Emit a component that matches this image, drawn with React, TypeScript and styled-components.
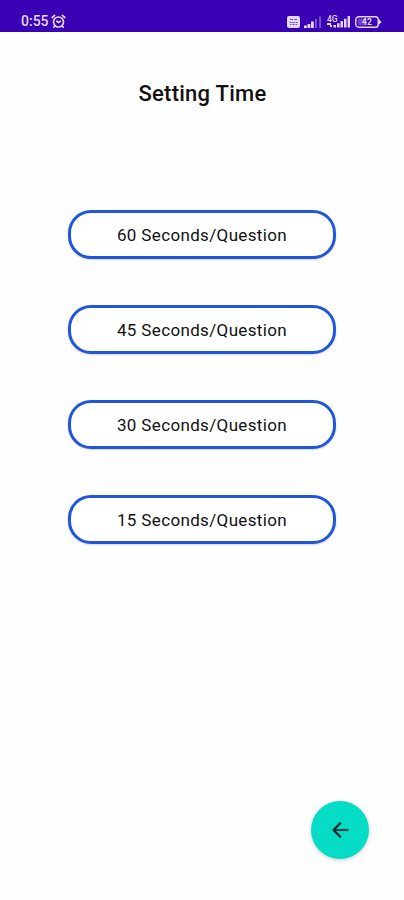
import React from "react";
import styled, { createGlobalStyle } from "styled-components";

const GlobalStyle = createGlobalStyle`
  * { box-sizing: border-box; }
  body { margin: 0; background: #fefefe; font-family: Roboto, sans-serif; }
`;

const Screen = styled.main`
  display: flex;
  flex-direction: column;
  align-items: center;
  width: 404px;
  height: 900px;
  background: #fefefe;
  overflow: hidden;
`;

const StatusBar = styled.header`
  display: flex;
  justify-content: space-between;
  width: 100%;
  height: 32px;
  padding: 14px 22px 0 21px;
  background: #3a00b3;
  color: #e4d8fa;
`;

const StatusGroup = styled.div<{ $gap: number }>`
  display: flex;
  align-items: center;
  gap: ${(p) => p.$gap}px;
  height: 15px;
`;

const Clock = styled.span`
  font-size: 14px;
  line-height: 15px;
  font-weight: 500;
`;

const Title = styled.h1`
  margin: 47px 0 0;
  padding-left: 1px;
  font-size: 22px;
  line-height: 30px;
  font-weight: 500;
  letter-spacing: 0.25px;
  color: #111;
`;

const Options = styled.div`
  display: flex;
  flex-direction: column;
  gap: 46px;
  margin-top: 101px;
`;

const OptionButton = styled.button`
  width: 268px;
  height: 49px;
  padding: 0;
  border: 3px solid #1f56dc;
  border-radius: 23px;
  background: #fff;
  box-shadow: 0 1px 2px rgba(0, 0, 0, 0.16);
  font-family: Roboto, sans-serif;
  font-size: 17px;
  line-height: 20px;
  letter-spacing: 0.35px;
  color: #111;
`;

const BackButton = styled.button`
  display: flex;
  align-items: center;
  justify-content: center;
  width: 58px;
  height: 58px;
  margin: auto 35px 41px auto;
  padding: 0;
  border: 0;
  border-radius: 50%;
  background: #05dcc5;
  box-shadow: 0 1px 4px rgba(0, 0, 0, 0.2);
`;

const times = [60, 45, 30, 15];

const AlarmIcon = () => (
  <svg width="15" height="15" viewBox="0 0 15 15" fill="none" stroke="currentColor" strokeWidth="1.7" strokeLinecap="round">
    <circle cx="7.5" cy="8" r="5" />
    <path d="M1.2 3.5 3.6 1.4M13.8 3.5 11.4 1.4M3.6 12.2 2.7 13.2M11.4 12.2l.9 1M5.8 7.2l1.7 1.3 1.8-1.2" />
  </svg>
);

const VolteIcon = () => (
  <svg width="13" height="12" viewBox="0 0 13 12">
    <rect width="13" height="12" rx="2" fill="currentColor" />
    <path d="M3 3.5h3M7 3.5h3M2.5 6.5h2M5.3 6.5h2.2M8.5 6.5h2M3 8.5h1.5M5.5 8.5h2M8.5 8.5H10" stroke="#5b2cbe" strokeWidth="1" opacity=".85" />
  </svg>
);

const SignalIcon = () => (
  <svg width="18" height="12" viewBox="0 0 18 12" fill="currentColor">
    <path d="M0 9.5h2.8V12H0zM3.5 8h2.8v4H3.5zM7 5.5h2.8V12H7z" />
    <path d="M11 3h2v9h-2zM15 0.5h2V12h-2z" opacity=".38" />
  </svg>
);

const Signal4GIcon = () => (
  <svg width="25" height="13" viewBox="0 0 25 13" fill="currentColor">
    <text x="1" y="6.5" fontFamily="Roboto" fontSize="8.5" fontWeight="500">4G</text>
    <path d="M1 8h4v2H1zM4 10h2v2H4zM7.5 10H10v2.5H7.5zM11 8.2h2.6v4.3H11zM14.5 6h2.5v6.5h-2.5zM18 3.8h2.5v8.7H18zM21.6 1h2.4v11.5h-2.4z" />
  </svg>
);

const BatteryIcon = () => (
  <svg width="27" height="12" viewBox="0 0 27 12">
    <rect x=".8" y=".8" width="22.4" height="10.4" rx="2.8" fill="none" stroke="currentColor" strokeWidth="1.4" />
    <rect x="2.8" y="2.6" width="8" height="6.8" rx="1" fill="currentColor" opacity=".3" />
    <path d="M23.6 2.8 26.5 6 23.6 9.2z" fill="currentColor" />
    <text x="12" y="9" textAnchor="middle" fontFamily="Roboto" fontSize="8.5" fontWeight="700" fill="currentColor">42</text>
  </svg>
);

const ArrowIcon = () => (
  <svg width="18" height="18" viewBox="0 0 18 18" fill="none">
    <path d="M17.5 9H3" stroke="#10454a" strokeWidth="2.2" />
    <path d="M9.7 1.7 2.5 9l7.2 7.3" stroke="#10262a" strokeWidth="2.2" />
  </svg>
);

export default function App() {
  return (
    <>
      <GlobalStyle />
      <Screen>
        <StatusBar>
          <StatusGroup $gap={2}>
            <Clock>0:55</Clock>
            <AlarmIcon />
          </StatusGroup>
          <StatusGroup $gap={4}>
            <VolteIcon />
            <SignalIcon />
            <Signal4GIcon />
            <BatteryIcon />
          </StatusGroup>
        </StatusBar>
        <Title>Setting Time</Title>
        <Options>
          {times.map((seconds) => (
            <OptionButton key={seconds}>{seconds} Seconds/Question</OptionButton>
          ))}
        </Options>
        <BackButton aria-label="Back">
          <ArrowIcon />
        </BackButton>
      </Screen>
    </>
  );
}
